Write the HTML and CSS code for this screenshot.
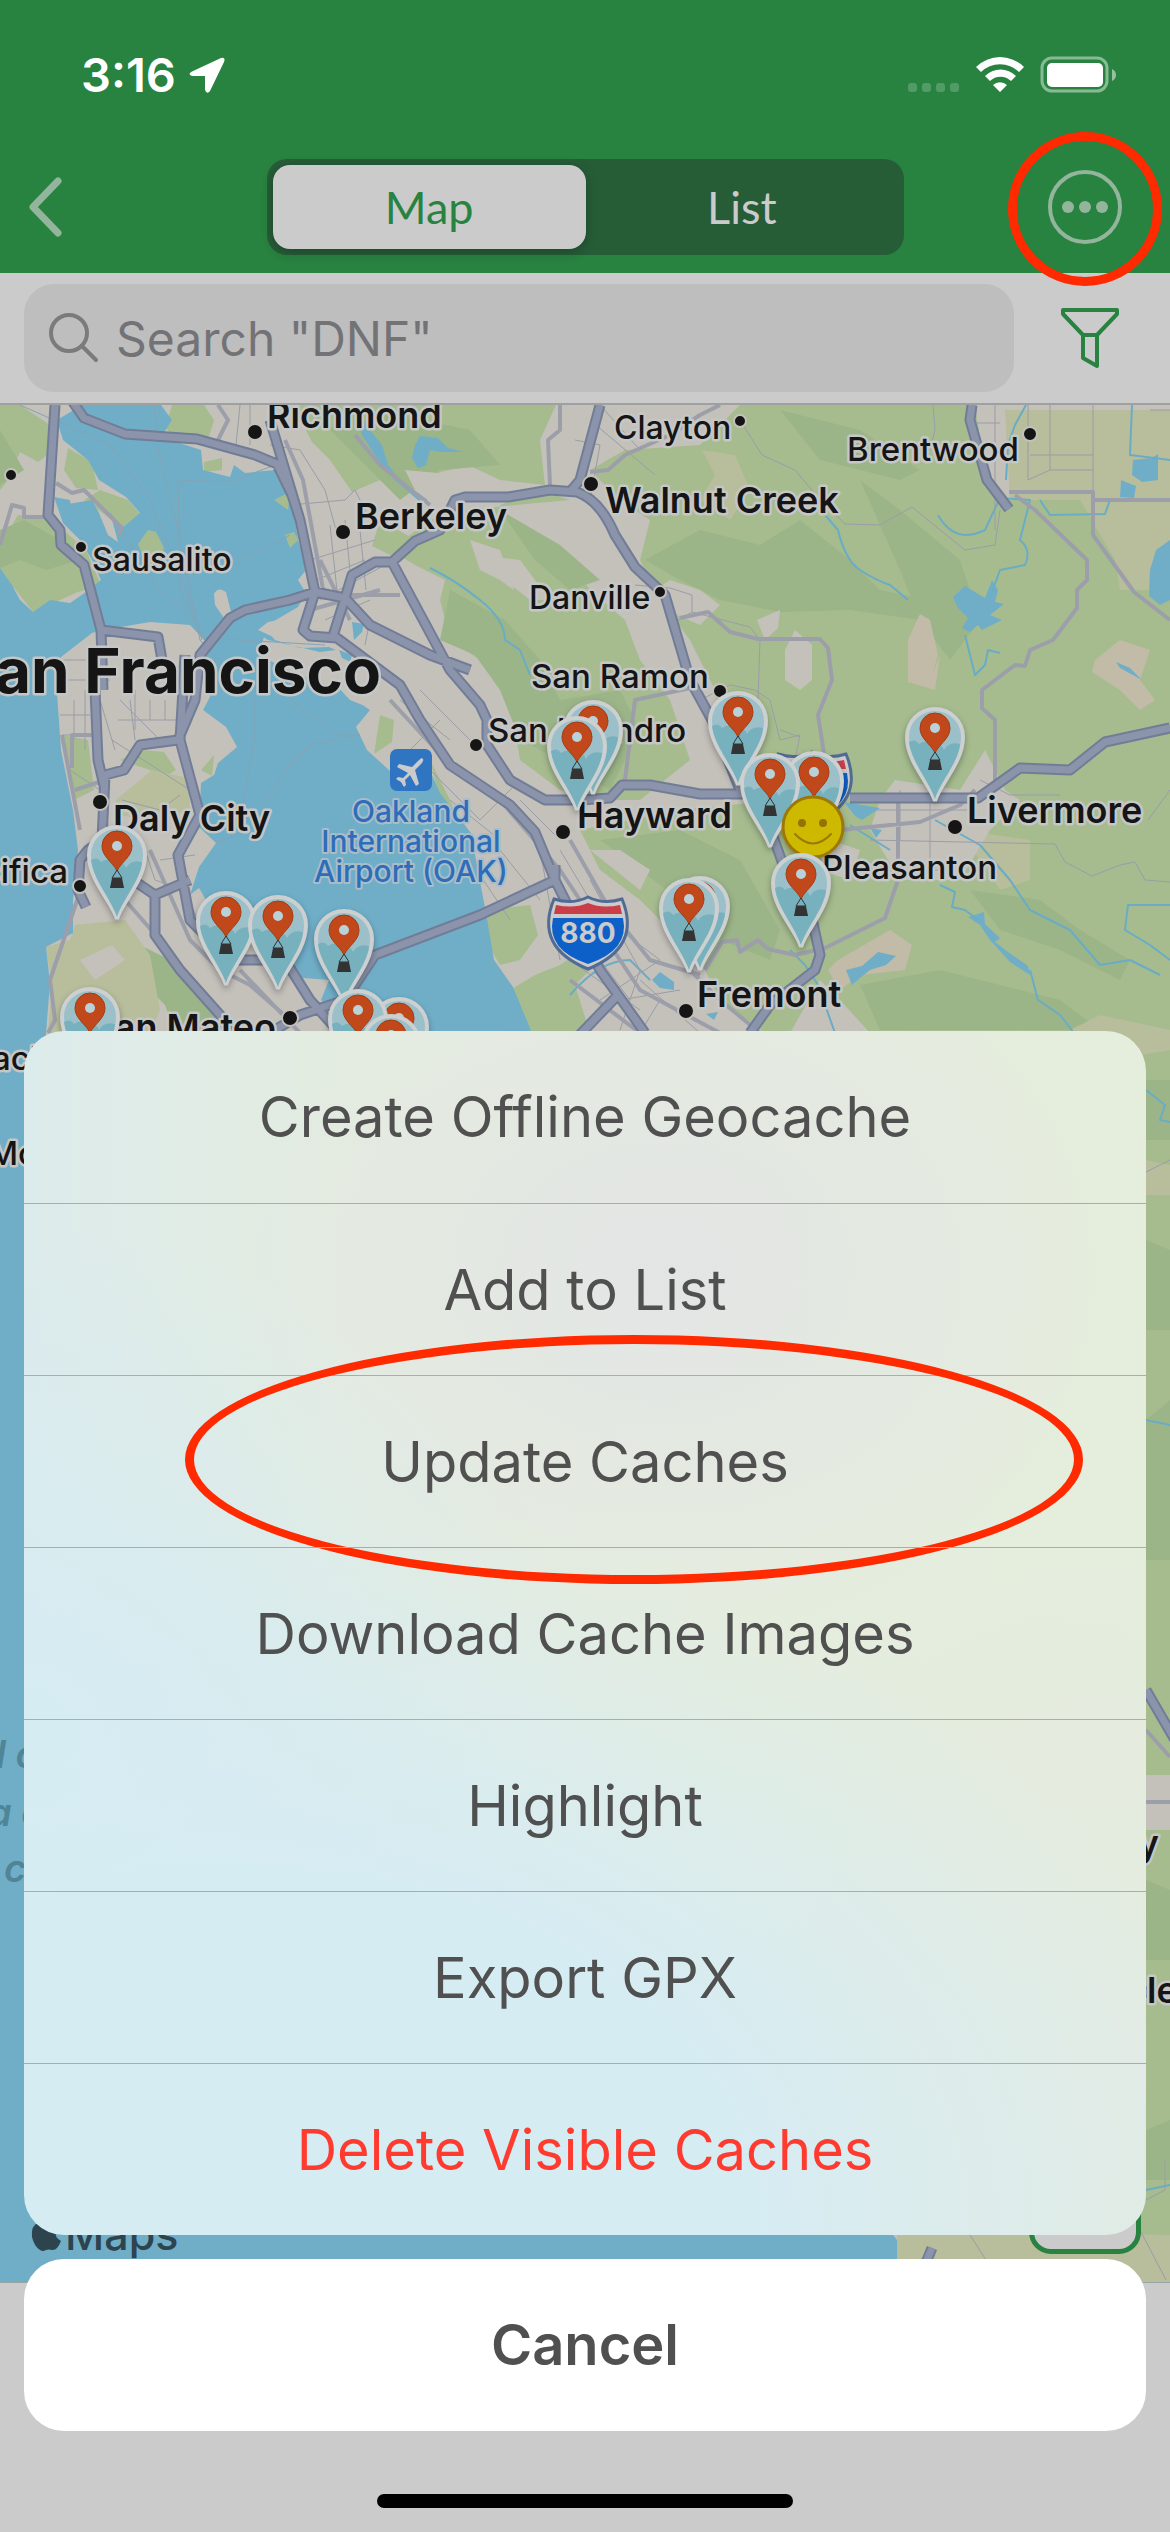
FILE: index.html
```
<!DOCTYPE html>
<html lang="en">
    <head>
        <meta charset="UTF-8" />
        <meta name="viewport" content="width=device-width, initial-scale=1.0"/>
        <title>Map</title>
        <link rel="stylesheet" href="styles.css">
    </head>
    <body>
        <header class="header">
            <div class="status">
                <span class="time">3:16</span>
                <svg class="arrow" width="36" height="36" viewBox="0 0 36 36"><path d="M3 14.500 32 1Q37 0 35 5L21 34Q18 38 16 33V19H3Q-2 17 3 14.500Z"/></svg>
                <svg class="status-icons" width="210" height="38" viewBox="0 0 210 38">
                    <g class="dim"><rect x="0" y="27" width="9" height="9" rx="3"/><rect x="14" y="27" width="9" height="9" rx="3"/><rect x="28" y="27" width="9" height="9" rx="3"/><rect x="42" y="27" width="9" height="9" rx="3"/></g>
                    <path d="M68 11a34 34 0 0 1 48 0l-5 5a27 27 0 0 0-38 0ZM77 20a22 22 0 0 1 31 0l-5 5a15 15 0 0 0-21 0ZM85 29a10 10 0 0 1 14 0l-7 7Z"/>
                    <rect class="cell" x="134" y="2" width="65" height="33" rx="10"/>
                    <rect x="139" y="7" width="56" height="24" rx="5"/>
                    <path class="nub" d="M204 13q4 2 4 6t-4 6Z"/>
                </svg>
            </div>
            <nav class="nav">
                <button class="back" aria-label="Back"><svg width="38" height="60" viewBox="0 0 38 60"><path d="M34 4 9 30 34 56"/></svg></button>
                <div class="segments">
                    <button class="segment selected">Map</button>
                    <button class="segment">List</button>
                </div>
                <button class="more" aria-label="More">
                    <svg width="76" height="76" viewBox="0 0 76 76"><circle class="ring" cx="38" cy="38" r="35"/><circle cx="21" cy="38" r="6"/><circle cx="38" cy="38" r="6"/><circle cx="55" cy="38" r="6"/></svg>
                    <span class="mark mark-more"></span>
                </button>
            </nav>
        </header>
        <form class="search">
            <label class="search-box">
                <svg width="52" height="52" viewBox="0 0 52 52"><circle cx="21" cy="21" r="18"/><path d="M34 34 48 48"/></svg>
                <input type="text" placeholder='Search "DNF"' aria-label="Search">
            </label>
            <button class="filter" type="button" aria-label="Filter"><svg width="60" height="64" viewBox="0 0 60 64"><path d="M3 4H57V8L37 29V60L23 52V29L3 8ZM23 29H37"/></svg></button>
        </form>
        <main class="map">
            <svg class="canvas" viewBox="0 405 1170 1877" preserveAspectRatio="xMidYMin slice">
                <defs>
                    <g id="pin">
                        <path class="pin-body" d="M0-2C-4-18-28-40-28-66A28 28 0 0 1 28-66C28-40 4-18 0-2Z"/>
                        <path class="pin-hill" d="M-26-61q6-4 10 2q8-6 14 2q8-4 11 4q5-9 16-6C24-42 6-22 0-4C-6-22-24-42-26-61Z"/>
                        <path class="pin-red" d="M0-50C-4-59-15-64-15-75A15 15 0 0 1 15-75C15-64 4-59 0-50Z"/>
                        <circle class="pin-hole" cx="0" cy="-75" r="5"/>
                        <path class="pin-rope" d="M0-51-5-43H5Z"/>
                        <path class="pin-box" d="M-5-43H5L7-33H-7Z"/>
                    </g>
                    <g id="shield">
                        <path class="shield-edge" d="M-34-34Q-16-28 0-36Q16-28 34-34Q54 14 0 36Q-54 14-34-34Z"/>
                        <path class="shield-blue" d="M-35-15H35Q42 17 0 31Q-42 17-35-15Z"/>
                        <path class="shield-red" d="M-32-28Q-14-24 0-30Q14-24 32-28L34-19H-34Z"/>
                    </g>
                    <path id="freeways" d="M55 405L48 515L60 530L61 545L84 565L101 630L103 690M101 630L158 637L162 660M68 395L84 418L125 434L197 439L255 455L277 464L292 495L300 520L315 592L345 598L352 575L375 562H392L415 541L440 530L455 500L465 497H508L550 490L577 492Q600 500 615 535L635 567L665 595L690 680L712 720L740 790L760 800L785 870L810 910L820 955L815 970L770 1005L750 1033M270 420L282 460L300 520M392 562L450 670L480 705L487 720V745L510 780L545 800H580L610 798L622 785H650L700 794H780M315 592L303 630L310 636L337 638L400 685L420 720L450 765L510 805L535 832L555 880L575 920L600 970L618 995L645 1033M345 598L333 636M345 598L370 625L430 655L470 670M315 592L290 600L245 610L230 618L200 655L195 700L178 740L140 745L124 770L105 775L102 840L88 850L80 860L78 890L86 907M95 690L98 760L105 790M185 655L180 740L200 815L178 855L190 920L230 960L285 960L310 1000L340 1033M190 880L155 895V935L180 970L220 1015L230 1033M133 880L155 895M555 865V880L480 915L375 955L345 1000L300 1015L270 1033M570 492L580 480L600 405M972 405L970 420L987 480L1009 509M850 798H978L1020 768L1070 770L1105 742L1170 728M618 995L570 1045M1146 1690L1175 1740M1146 1992H1170M918 2282L932 2248"/>
                </defs>
                <rect class="land" x="0" y="405" width="1170" height="1877"/>

                <!-- parks and hills -->
                <g class="green">
                    <path d="M0 405H20L50 425L54 450L38 462L20 452L8 480L0 490ZM172 405H204L214 420L208 440L176 438L165 428ZM68 448L92 462L98 490L76 488L64 470ZM84 500L100 490L128 500L140 514L122 528L104 514ZM0 545L18 515L52 520L86 550L101 585L78 592L33 612L0 570ZM204 462L222 458L222 470L204 472Z"/>
                    <path d="M293 405H556L540 440L545 485L500 480L470 466L440 472L420 490L380 480L352 492L330 460L312 442ZM380 520L430 548L400 560L372 546Z"/>
                    <path d="M570 500L540 490L500 505L520 530L560 545L590 590L625 620L640 660L670 700L690 760L640 800L600 800L560 790L520 760L510 700L480 660L450 640L440 600L445 580L415 565L390 550L430 520L460 510Z"/>
                    <path d="M590 470L625 450L700 445L740 405H975L985 470L1010 500L1170 500V1033H870L840 1000L820 980L790 1033H765L720 1000L700 960L640 900L600 870L580 830L680 810L780 800L720 730L715 690L690 640L660 600L640 560L650 520L620 500Z"/>
                    <path d="M120 760L142 750L164 752L176 770L160 780L150 770ZM62 735L88 740L94 790L74 800ZM380 715L394 720L392 742L374 754ZM430 760L450 800L470 850L484 910L470 900L440 800ZM485 910L530 905L538 935L520 960L500 965L488 945ZM510 990L535 975L560 965L590 945L600 960L575 985L590 1033H530ZM900 1030H1170V2282H897V2235L1100 2235Z"/>
                </g>
                <g class="dark-green">
                    <path d="M0 430L24 470L0 485ZM0 530L24 520L60 540L80 560L46 570L20 560L0 568ZM350 405L470 430L500 465L440 470L400 500L370 470L330 430Z"/>
                    <path d="M450 590L505 620L540 660L560 700L620 690L640 730L610 790L560 760L520 740L500 690L475 655L440 640ZM500 510L560 545L600 580L570 590L535 560Z"/>
                    <path d="M645 560L700 530L760 545L800 520L850 560L880 590L930 600L920 620L850 610L780 612L720 600L680 580ZM780 410L860 430L920 470L900 480L820 460ZM860 480L900 510L960 560L980 620L950 660L920 620L900 570ZM600 840L680 830L740 860L780 930L770 960L720 940L680 900L640 870Z"/>
                    <path d="M860 985L940 970L1000 985L1060 1000L1100 1030H880ZM970 890L1040 900L1080 930L1130 960L1120 980L1060 950L1000 930ZM1146 1080H1170V1140H1146ZM1146 1240L1170 1250V1330H1146ZM1146 1420L1170 1400V1560H1146ZM1146 1880L1170 1890V1960H1146ZM1146 2130L1170 2120V2180H1146ZM140 945L170 960L215 1010L220 1033H175L165 1005L150 990Z"/>
                </g>
                <g class="pale">
                    <path d="M75 925L125 920L150 955L160 1010L150 1033H48L52 985L46 947L70 940ZM135 545L152 530L165 550L160 565L140 560ZM702 450L735 455L750 490L730 520L700 500L715 475ZM1005 410H1170V590L1120 590L1115 560L1080 500L1010 500ZM960 830L1030 840L1030 880L1000 890ZM116 800L152 770L188 778L190 810L150 820L118 815ZM1070 1030L1100 1015L1170 1030V1050L1140 1055ZM1146 1160L1170 1165V1195H1146ZM897 2230L1170 2235V2282H897Z"/>
                </g>
                <g class="town">
                    <path d="M405 470L460 475L495 500L480 520L450 500L420 500ZM480 555L520 560L550 600L530 600L505 580ZM470 540L500 550L514 590L500 580L480 570ZM640 600L670 580L700 590L720 605L700 625L670 612ZM757 620L780 610L778 628L765 640ZM785 650L795 630L812 645L812 680L800 690L785 680ZM560 520L595 530L600 565L585 560ZM880 800L895 780L960 790L985 750L1005 790L1020 800L990 830L960 880H900L870 830ZM590 850L620 850L650 870L640 890L615 870ZM830 840L860 850L850 880L820 870ZM80 960L112 945L125 960L95 980ZM1146 1775H1170V1830H1146Z"/>
                </g>
                <g class="sand">
                    <path d="M908 640L920 614L930 620L938 655L932 675L940 655L935 690L908 682ZM1095 660L1120 640L1150 650L1140 680L1155 700L1140 710L1120 690L1092 672ZM838 960L890 930L912 945L905 970L860 975L840 990L828 970Z"/>
                </g>

                <!-- ocean and bay -->
                <path class="water" d="M0 568L12 585L20 600L33 612L50 600L70 603L86 592L101 580L92 560L80 540L63 523L54 497L70 500L73 520L80 535L62 505L92 500L99 513L108 535L118 542L110 512L122 528L140 513L126 497L99 480L88 460L63 440L57 420L82 405H161L172 420L161 437L201 450L203 470L230 477L234 465L245 473L275 470L291 497L298 540L304 560L306 570L298 580L306 593L298 607L264 627L275 640L300 648L329 647L336 650L320 652L268 640L256 632L268 625L258 655L300 675L341 690L370 710L356 727L367 750L400 780L432 775L440 793L471 833L486 913L494 960L513 987L532 1033V1100H430L360 1033L321 1000L329 980L291 977L280 965L240 930L210 907L199 888L190 895L199 867L216 843L199 827L201 783L214 775L218 763L237 747L226 727L203 710L210 697L203 667L207 643L190 625L150 622L103 630L92 633L61 657L57 693L61 750L73 810L78 850L73 900V933L46 947L50 983L46 1033V1100L897 2240V2282H0Z"/>
                <path class="land" d="M214 594Q218 586 226 592L231 612L224 618L215 605ZM268 648L330 657L360 672L398 700L396 716L380 712L350 700L335 684L300 675ZM280 640L258 630L268 622L290 618L304 605L310 640Z"/>
                <path class="green" d="M138 544L148 530L156 532L164 548L158 566L144 560ZM274 500L290 492L288 510ZM285 535L294 532L298 540L290 548ZM201 770L214 755L212 776Z"/>
                <g class="water">
                    <path d="M354 405L370 430L382 445L388 465L400 480L428 500L420 502L395 480L378 460L362 435ZM415 445L420 436L438 438L448 448L464 452L440 452L430 450L426 465L418 468L412 458Z"/>
                    <path d="M965 586L985 598L992 580L998 590L995 602L1004 604L990 615L1002 620L990 626L982 630L978 625L970 632L962 628L968 618L958 608L953 597ZM1133 460L1152 458L1158 454V480L1142 482L1132 475ZM1121 480L1136 486L1134 498L1120 497ZM1150 570L1156 550L1170 540V600L1160 605L1149 596ZM1116 662L1130 668L1142 680L1120 668ZM846 970L862 966L878 952L896 956L886 965L870 970L860 978L852 985ZM968 917L984 912L985 924L1000 938L995 942L1008 952L1028 966L1030 975L1010 962L990 940L980 925ZM652 980L660 972L674 982V990L660 988ZM706 1014L718 1012L714 1020ZM844 802L880 808L862 820L855 816ZM870 828L882 830L876 838ZM352 622L364 624L362 632L354 640ZM339 650L352 655L350 662L342 658Z"/>
                </g>
                <g class="creek">
                    <path d="M430 568Q455 580 480 600T505 640L520 650L530 675M825 515L838 530Q845 560 860 570T890 585L908 600M1026 405L1015 425L1008 445L1006 480M992 592L1000 570L1025 565Q1032 550 1020 540L1030 500L1000 498L985 530Q955 545 938 515M965 635L975 675L985 665L988 650L1000 653M1132 405L1130 455L1170 460M850 825L890 850M935 820L980 845L1010 880L1030 910L1070 930L1100 965L1130 960L1160 975M940 885L955 892L952 907L965 910L978 920M1030 970L1038 1000L1060 1015L1074 1033M790 950L805 965L818 985L835 1033M1170 905L1128 905L1125 930L1150 945L1170 960M570 995Q600 960 630 960L650 980M1040 500L1050 515L1105 514L1110 500M1146 1090L1165 1105L1160 1120L1170 1122M1146 1420L1170 1425M1146 2190L1170 2185M946 2280Q935 2260 930 2268"/>
                </g>
                <g class="ferry">
                    <path d="M20 405L110 445L150 500L190 600L202 640M154 405L158 450L178 530L200 640M178 480L180 590L205 640M178 480L230 482L275 465M120 528L160 590L200 625M234 565L290 535M205 638L325 645M200 640L255 700V735L240 820M290 700L340 735L360 735L310 745L285 770L250 830L216 843"/>
                </g>

                <!-- streets -->
                <g class="street">
                    <path d="M240 405L236 445L265 465M250 405V445M270 445L300 450L325 490L336 530M290 505L345 500L355 490L370 520M310 560L375 540M316 580L365 560M320 600L385 565M325 620L370 600M330 525L338 600M345 520L352 590M360 530L366 590M62 660H100M62 680H110M74 700V740M85 690V750M100 700L115 750M120 700L160 740M135 690V730M60 715H90M62 735H95M70 770L100 790M130 700L135 740M150 700V720M165 700V720M118 720H185M112 740L190 790M122 800L160 810L180 795M145 850L155 880L185 890M160 860L195 855M355 605L370 620L365 645M360 660L385 680M400 700L450 740M420 690L470 740M440 720L400 760M430 770L480 820L520 780M450 800L500 840M500 850L540 900M470 860L510 920M520 800L560 840M560 850L590 900M540 850L560 960M580 900L620 930L660 960M560 930L600 960L630 1000M590 880L640 970L620 1030M600 1000L660 960M640 980L700 1033M660 1000L640 1033M620 1000L680 990M570 960L640 1010"/>
                    <path d="M590 420L655 475M575 440L600 445L590 500M600 405L640 450M635 585L670 588L692 595V612L670 625M692 612L750 627L760 640L758 700L750 740M700 700L730 685L755 690L770 700L780 740L800 735L795 760M780 730L800 737M933 405L935 430L930 450M995 405V530M1028 405V480L1050 470H1093M1050 405V470M1093 405V500M975 423H1000M1030 455H1093M1170 410H1150M740 420L762 455L795 470L820 500L845 524L880 525L912 507L965 550L995 545L1000 510M870 840L1055 844L1065 862L1092 876L1120 865L1135 862L1145 880L1170 882M900 790V840M930 800V880M875 810H970M980 780L1010 795H1060M1148 820L1170 790M880 870H950M1146 1172L1170 1160M1146 2200L1165 2190V2160M1140 2230L1166 2280M970 2235L1000 2282"/>
                </g>
                <g class="road">
                    <path d="M0 545L12 505L24 508V517H46M56 483L72 493L84 490L122 528L118 535M218 405L228 420L218 440M285 440L303 480L325 600M355 435L380 465L430 505M560 405V430L548 440L550 485M310 610L380 590M320 560L350 620M350 595L400 595M590 472L608 470L625 455L670 435L700 415L720 405M680 618L708 612L730 632L758 639H820L828 648L832 680L818 715L825 760L820 790M1009 492H1093V535L1134 592L1170 620M1093 500H1170M1015 495L1035 510L1087 560V580L1077 590V608L1053 640L1030 650L1025 666L1015 665L982 690V708L995 720V780M690 688L635 700L625 780L612 790M898 800V880L885 918L825 948L795 955L768 949L758 940L740 952L737 940L722 942L705 970M840 830L920 822L960 805L975 790M72 768V735L100 735M75 790L105 780M62 735L80 830M84 880L50 980L55 1020L48 1033M125 900L160 940L190 980M150 850L190 940L220 970L250 985L290 1020M390 700L455 770L500 800L560 870L640 990L720 1033M570 840L610 910L650 960L700 975M570 980L640 1033M690 970L720 1000L760 1033M240 970L300 1033M180 880L200 930M1146 1802H1170M1146 1730L1170 1757"/>
                </g>
                <use class="freeway" href="#freeways"/>
                <use class="freeway-top" href="#freeways"/>

                <!-- city labels -->
                <g class="dots">
                    <circle cx="255" cy="432" r="8"/><circle cx="343" cy="532" r="8"/><circle cx="591" cy="484" r="8"/><circle cx="11" cy="475" r="6"/><circle cx="81" cy="547" r="6"/><circle cx="740" cy="421" r="6"/><circle cx="1030" cy="434" r="7"/><circle cx="660" cy="592" r="6"/><circle cx="720" cy="691" r="7"/><circle cx="476" cy="745" r="7"/><circle cx="100" cy="802" r="8"/><circle cx="80" cy="886" r="7"/><circle cx="563" cy="832" r="8"/><circle cx="955" cy="827" r="8"/><circle cx="686" cy="1011" r="8"/><circle cx="290" cy="1018" r="8"/>
                </g>
                <g class="city">
                    <text x="267" y="428">Richmond</text>
                    <text x="355" y="529">Berkeley</text>
                    <text x="605" y="513">Walnut Creek</text>
                    <text x="113" y="831">Daly City</text>
                    <text x="577" y="828">Hayward</text>
                    <text x="967" y="823">Livermore</text>
                    <text x="697" y="1007">Fremont</text>
                    <text class="end" x="276" y="1040">San Mateo</text>
                    <text class="end" x="1159" y="1856">y</text>
                    <text x="1147" y="2003">le</text>
                </g>
                <text class="metro end" x="381" y="693">San Francisco</text>
                <g class="town-name">
                    <text x="92" y="571">Sausalito</text>
                    <text x="614" y="439">Clayton</text>
                    <text x="529" y="609">Danville</text>
                </g>
                <g class="town-name large">
                    <text x="847" y="461">Brentwood</text>
                    <text x="531" y="688">San Ramon</text>
                    <text x="488" y="742">San Leandro</text>
                    <text x="822" y="879">Pleasanton</text>
                    <text class="end" x="68" y="883">Pacifica</text>
                    <text x="-8" y="1070">ach</text>
                    <text x="-12" y="1165">Mo</text>
                </g>
                <g class="sea">
                    <text x="-4" y="1768">l c</text>
                    <text x="-12" y="1826">a c</text>
                    <text x="4" y="1882">c</text>
                </g>
                <rect class="airport-tile" x="390" y="749" width="42" height="42" rx="7"/>
                <path class="plane" d="M422 758q3 2-1 6l-6 6 4 14-3 2-6-11-5 5 1 5-2 2-3-5-5-3 2-2 5 1 5-5-11-6 2-3 13 3 6-6q3-3 4-3Z"/>
                <g class="airport">
                    <text x="411" y="822">Oakland</text>
                    <text x="411" y="852">International</text>
                    <text x="411" y="882">Airport (OAK)</text>
                </g>
                <use href="#shield" x="588" y="933"/>
                <text class="shield-text" x="588" y="943">880</text>
                <use href="#shield" x="812" y="788"/>

                <!-- caches -->
                <g class="pins">
                    <use href="#pin" x="593" y="796"/><use href="#pin" x="577" y="812"/>
                    <use href="#pin" x="738" y="787"/><use href="#pin" x="814" y="847"/><use href="#pin" x="770" y="849"/>
                    <use href="#pin" x="935" y="803"/>
                    <use href="#pin" x="117" y="921"/><use href="#pin" x="226" y="987"/><use href="#pin" x="278" y="991"/><use href="#pin" x="344" y="1005"/>
                    <use href="#pin" x="90" y="1083"/><use href="#pin" x="399" y="1093"/><use href="#pin" x="358" y="1085"/><use href="#pin" x="391" y="1110"/>
                    <use href="#pin" x="700" y="972"/><use href="#pin" x="689" y="974"/>
                    <g class="smiley"><circle cx="813" cy="827" r="30"/><path d="M795 834Q813 853 831 834"/><circle class="eye" cx="802" cy="823" r="4"/><circle class="eye" cx="823" cy="823" r="4"/></g>
                    <use href="#pin" x="801" y="949"/>
                </g>

                <path class="apple" d="M53 2222q-5 0-8 3-3-3-7-2-7 2-6 14 2 9 8 13 3 2 6 0 3-1 6 0 5 1 9-9-7-4-5-10 1-4 4-6-3-3-7-3Z"/>
                <text class="maps" x="65" y="2250">Maps</text>
            </svg>
            <button class="locate" aria-label="My location"></button>
        </main>
        <footer class="toolbar"></footer>

        <div class="overlay">
            <div class="sheet">
                <button class="action">Create Offline Geocache</button>
                <button class="action">Add to List</button>
                <button class="action">Update Caches<span class="mark mark-row"></span></button>
                <button class="action">Download Cache Images</button>
                <button class="action">Highlight</button>
                <button class="action">Export GPX</button>
                <button class="action danger">Delete Visible Caches</button>
            </div>
            <button class="cancel">Cancel</button>
            <div class="home"></div>
        </div>
    </body>
</html>
```
FILE: styles.css
```
* {
    box-sizing: border-box;
}
body {
    margin: 0;
    min-height: 100vh;
    position: relative;
    display: flex;
    flex-direction: column;
    background-color: #cbcbcb;
    font-family: Inter, "Liberation Sans", sans-serif;
}
button {
    border: none;
    padding: 0;
    background: none;
    font-family: inherit;
}
svg {
    display: block;
}

/* header */
.header {
    background-color: #288240;
}
.status {
    display: flex;
    align-items: center;
    height: 141px;
    padding: 8px 52px 0 81px;
    color: white;
    fill: white;
}
.time {
    font-size: 47px;
    font-weight: 600;
}
.arrow {
    margin-left: 13px;
}
.status-icons {
    margin-left: auto;
}
.dim {
    opacity: 0.2;
}
.cell {
    fill: none;
    stroke: white;
    stroke-width: 3;
    opacity: 0.45;
}
.nub {
    opacity: 0.5;
}
.nav {
    display: flex;
    align-items: center;
    justify-content: space-between;
    height: 132px;
    padding: 0 47px 0 24px;
}
.back path {
    fill: none;
    stroke: #93b59c;
    stroke-width: 7;
    stroke-linecap: round;
    stroke-linejoin: round;
}
.segments {
    display: flex;
    width: 58%;
    height: 96px;
    margin-left: 62px;
    padding: 6px;
    border-radius: 20px;
    background-color: #265d37;
}
.segment {
    flex: 1;
    border-radius: 17px;
    font-family: Lato, Inter, sans-serif;
    font-size: 45px;
    color: #cbcbcb;
}
.selected {
    background-color: #cbcbcb;
    color: #288240;
    box-shadow: 0 3px 12px rgba(0, 0, 0, 0.25);
}
.more {
    position: relative;
    fill: #93b59c;
}
.ring {
    fill: none;
    stroke: #93b59c;
    stroke-width: 4;
}
.mark {
    position: absolute;
    border: 9px solid #ff2a00;
    border-radius: 50%;
    pointer-events: none;
}
.mark-more {
    inset: -37px -39px -41px;
    z-index: 1;
}

/* search */
.search {
    display: flex;
    align-items: center;
    gap: 46px;
    height: 132px;
    margin: 0;
    padding: 0 50px 0 24px;
    border-bottom: 2px solid #a0a0a0;
    background-color: #cbcbcb;
}
.search-box {
    display: flex;
    align-items: center;
    flex: 1;
    gap: 16px;
    height: 108px;
    padding: 0 24px;
    border-radius: 30px;
    background-color: #bebebe;
}
.search-box svg {
    fill: none;
    stroke: #7b7b7d;
    stroke-width: 4;
    stroke-linecap: round;
}
.search-box input {
    flex: 1;
    min-width: 0;
    border: none;
    padding: 0;
    background: none;
    font-family: inherit;
    font-size: 48px;
}
.search-box input::placeholder {
    color: #737377;
    opacity: 1;
}
.filter path {
    fill: none;
    stroke: #288240;
    stroke-width: 4;
    stroke-linejoin: round;
}

/* map */
.map {
    position: relative;
    flex: 1;
    overflow: hidden;
    border-bottom: 1px solid #98a5a5;
}
.canvas {
    width: 100%;
}
.land, .town {
    fill: #c4c1bb;
}
.green {
    fill: #a6bc8f;
}
.dark-green {
    fill: #9bb588;
}
.pale {
    fill: #b8bd9b;
}
.sand {
    fill: #c2bba8;
}
.water {
    fill: #70aec8;
}
.creek, .ferry, .street, .road, .freeway, .freeway-top {
    fill: none;
    stroke-linejoin: round;
}
.creek {
    stroke: #69acc6;
    stroke-width: 2;
}
.ferry {
    stroke: #84a3b5;
    stroke-width: 1;
}
.street {
    stroke: #9a9da7;
    stroke-width: 1;
}
.road {
    stroke: #9c9faa;
    stroke-width: 4;
}
.freeway {
    stroke: #717d97;
    stroke-width: 11;
}
.freeway-top {
    stroke: #8b94aa;
    stroke-width: 7;
}
.dots circle {
    fill: #151515;
    stroke: #c4c1bb;
    stroke-width: 2;
}
.canvas text {
    fill: #151515;
    stroke: #c5c7c7;
    stroke-width: 5;
    stroke-linejoin: round;
    paint-order: stroke;
}
.city {
    font-size: 36px;
    font-weight: 600;
}
.metro {
    font-size: 62px;
    font-weight: 700;
}
.end {
    text-anchor: end;
}
.town-name {
    font-size: 32px;
    font-weight: 500;
}
.large {
    font-size: 33px;
}
.canvas .sea text {
    fill: #4f8597;
    stroke: none;
    font-size: 38px;
    font-style: italic;
    font-weight: 600;
}
.airport-tile {
    fill: #2f75c2;
}
.plane {
    fill: #cbcbcb;
}
.airport {
    font-size: 30px;
    font-weight: 500;
    text-anchor: middle;
}
.canvas .airport text {
    fill: #2f6dbb;
    stroke: #a9bdc9;
    stroke-width: 4;
}
.shield-edge {
    fill: #cbcbcb;
    stroke: #526b94;
    stroke-width: 3;
}
.shield-blue {
    fill: #0c60c8;
}
.shield-red {
    fill: #c93e49;
}
.canvas .shield-text {
    fill: #cbcbcb;
    stroke: none;
    font-size: 28px;
    font-weight: 700;
    text-anchor: middle;
}
.pins {
    filter: drop-shadow(0 3px 3px rgba(0, 0, 0, 0.3));
}
.pin-body {
    fill: #9bc0c9;
    stroke: #cdd0d0;
    stroke-width: 4;
}
.pin-hill {
    fill: #78b1be;
}
.pin-red {
    fill: #c0481b;
    stroke: #a63b12;
    stroke-width: 1;
}
.pin-hole {
    fill: #b9d1d8;
}
.pin-rope {
    fill: none;
    stroke: #333;
    stroke-width: 1;
}
.pin-box {
    fill: #333;
}
.smiley {
    fill: #ccb900;
    stroke: #9d7808;
    stroke-width: 3;
}
.smiley path {
    fill: none;
    stroke-width: 2;
    stroke-linecap: round;
}
.smiley .eye {
    fill: #957204;
    stroke: none;
}
.apple {
    fill: #2d444e;
}
.canvas .maps {
    fill: #2d444e;
    stroke: none;
    font-size: 43px;
    font-weight: 500;
}
.locate {
    position: absolute;
    right: 29px;
    bottom: 28px;
    width: 112px;
    height: 112px;
    border: 5px solid #288240;
    border-radius: 22px;
    background-color: #cbcbcb;
}
.toolbar {
    height: 250px;
}

/* action sheet */
.overlay {
    position: absolute;
    left: 0;
    right: 0;
    bottom: 0;
    display: flex;
    flex-direction: column;
    gap: 24px;
    padding: 0 24px 25px;
}
.sheet {
    border-radius: 40px;
    background:
        radial-gradient(ellipse 50% 42% at 0% 58%, #d6ecf3, #d6ecf300),
        radial-gradient(ellipse 40% 30% at 57% 20%, #e3e5e5, #e3e5e500),
        radial-gradient(ellipse 90% 60% at 20% 100%, #d6ecf3 50%, #d6ecf300),
        radial-gradient(ellipse 50% 50% at 100% 90%, #e4ebe2, #e4ebe200),
        linear-gradient(90deg, #dcebeb, #e4ecdf 30%, #e5eddd);
}
.action, .cancel {
    position: relative;
    display: block;
    width: 100%;
    height: 172px;
    font-size: 56px;
    color: #505050;
}
.action + .action {
    border-top: 1px solid #a0b3aa;
}
.action.danger {
    color: #ff3b30;
}
.mark-row {
    left: 161px;
    top: -41px;
    width: 80%;
    height: 249px;
}
.cancel {
    border-radius: 40px;
    background-color: white;
    font-weight: 600;
}
.home {
    width: 416px;
    height: 14px;
    margin: 39px auto 0;
    border-radius: 7px;
    background-color: black;
}
```
